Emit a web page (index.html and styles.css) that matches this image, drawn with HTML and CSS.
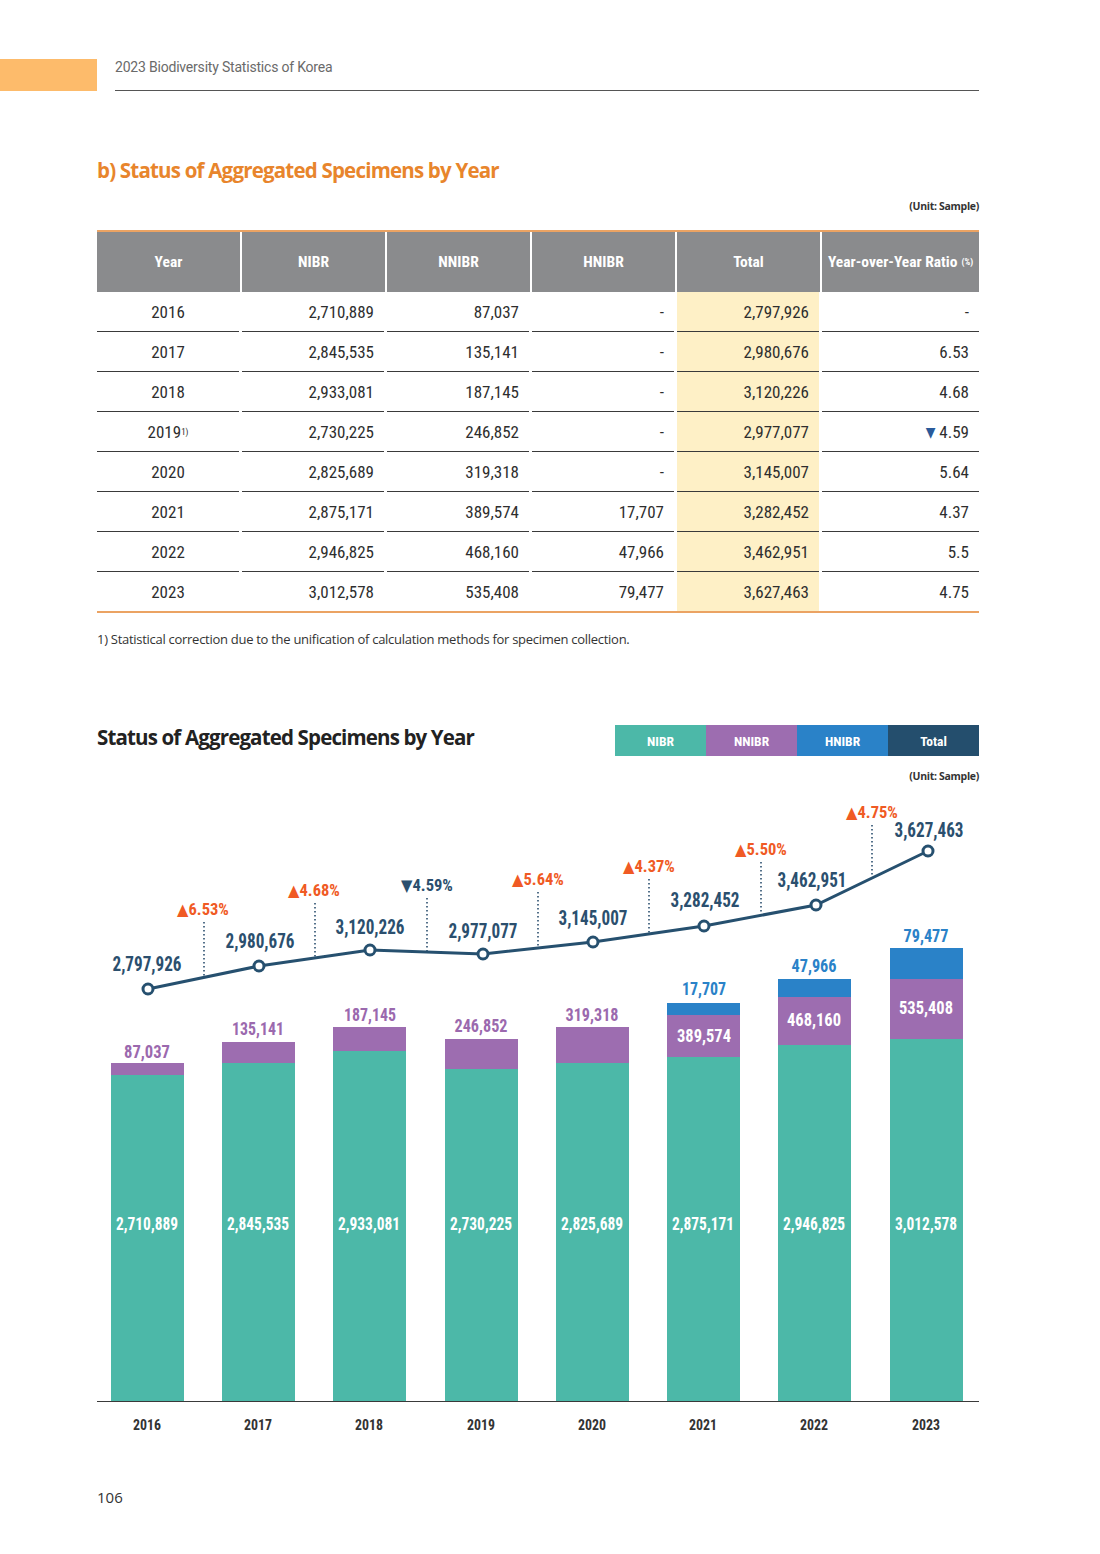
FILE: index.html
```html
<!DOCTYPE html>
<html>
<head>
<meta charset="utf-8">
<link rel="stylesheet" href="styles.css">
</head>
<body>
<div class="page">
  <header class="running-head">
    <div class="tab"></div>
    <div class="head-text">2023 Biodiversity Statistics of Korea</div>
  </header>

  <main class="content">
    <h2 class="section-title">b) Status of Aggregated Specimens by Year</h2>
    <div class="unit">(Unit: Sample)</div>

    <div class="table">
      <div class="row head">
        <div class="cell">Year</div>
        <div class="cell">NIBR</div>
        <div class="cell">NNIBR</div>
        <div class="cell">HNIBR</div>
        <div class="cell">Total</div>
        <div class="cell">Year-over-Year Ratio <span class="pct">(%)</span></div>
      </div>
      <div class="row"><div class="cell c">2016</div><div class="cell">2,710,889</div><div class="cell">87,037</div><div class="cell">-</div><div class="cell total">2,797,926</div><div class="cell">-</div></div>
      <div class="row"><div class="cell c">2017</div><div class="cell">2,845,535</div><div class="cell">135,141</div><div class="cell">-</div><div class="cell total">2,980,676</div><div class="cell">6.53</div></div>
      <div class="row"><div class="cell c">2018</div><div class="cell">2,933,081</div><div class="cell">187,145</div><div class="cell">-</div><div class="cell total">3,120,226</div><div class="cell">4.68</div></div>
      <div class="row"><div class="cell c">2019<sup>1)</sup></div><div class="cell">2,730,225</div><div class="cell">246,852</div><div class="cell">-</div><div class="cell total">2,977,077</div><div class="cell"><span class="down">▼</span>4.59</div></div>
      <div class="row"><div class="cell c">2020</div><div class="cell">2,825,689</div><div class="cell">319,318</div><div class="cell">-</div><div class="cell total">3,145,007</div><div class="cell">5.64</div></div>
      <div class="row"><div class="cell c">2021</div><div class="cell">2,875,171</div><div class="cell">389,574</div><div class="cell">17,707</div><div class="cell total">3,282,452</div><div class="cell">4.37</div></div>
      <div class="row"><div class="cell c">2022</div><div class="cell">2,946,825</div><div class="cell">468,160</div><div class="cell">47,966</div><div class="cell total">3,462,951</div><div class="cell">5.5</div></div>
      <div class="row last"><div class="cell c">2023</div><div class="cell">3,012,578</div><div class="cell">535,408</div><div class="cell">79,477</div><div class="cell total">3,627,463</div><div class="cell">4.75</div></div>
    </div>
    <p class="footnote">1) Statistical correction due to the unification of calculation methods for specimen collection.</p>

    <div class="chart-head">
      <h3 class="chart-title">Status of Aggregated Specimens by Year</h3>
      <ul class="legend">
        <li class="lg nibr">NIBR</li>
        <li class="lg nnibr">NNIBR</li>
        <li class="lg hnibr">HNIBR</li>
        <li class="lg total">Total</li>
      </ul>
    </div>
    <div class="unit unit2">(Unit: Sample)</div>

    <svg class="chart" width="882" height="660" viewBox="97 790 882 660" xmlns="http://www.w3.org/2000/svg">
      <!-- NIBR -->
      <g fill="#4cb8a8">
        <rect x="111" y="1075" width="73" height="326"/>
        <rect x="222" y="1063" width="73" height="338"/>
        <rect x="333" y="1051" width="73" height="350"/>
        <rect x="445" y="1069" width="73" height="332"/>
        <rect x="556" y="1063" width="73" height="338"/>
        <rect x="667" y="1057" width="73" height="344"/>
        <rect x="778" y="1045" width="73" height="356"/>
        <rect x="890" y="1039" width="73" height="362"/>
      </g>
      <!-- NNIBR -->
      <g fill="#9d6db0">
        <rect x="111" y="1063" width="73" height="12"/>
        <rect x="222" y="1042" width="73" height="21"/>
        <rect x="333" y="1027" width="73" height="24"/>
        <rect x="445" y="1039" width="73" height="30"/>
        <rect x="556" y="1027" width="73" height="36"/>
        <rect x="667" y="1015" width="73" height="42"/>
        <rect x="778" y="997" width="73" height="48"/>
        <rect x="890" y="979" width="73" height="60"/>
      </g>
      <!-- HNIBR -->
      <g fill="#2a82c8">
        <rect x="667" y="1003" width="73" height="12"/>
        <rect x="778" y="979" width="73" height="18"/>
        <rect x="890" y="948" width="73" height="31"/>
      </g>
      <line x1="97" y1="1401.5" x2="979" y2="1401.5" stroke="#3a3a3a" stroke-width="1"/>

      <!-- dotted leaders -->
      <g stroke="#2b4f6e" stroke-width="1.6" stroke-dasharray="1.6 2.4">
        <line x1="204" y1="922" x2="204" y2="977"/>
        <line x1="315" y1="903" x2="315" y2="958"/>
        <line x1="427" y1="898" x2="427" y2="952"/>
        <line x1="538" y1="892" x2="538" y2="948"/>
        <line x1="649" y1="879" x2="649" y2="934"/>
        <line x1="761" y1="862" x2="761" y2="915"/>
        <line x1="872" y1="825" x2="872" y2="878"/>
      </g>

      <!-- total line -->
      <polyline points="148,989 259,966 370,950 483,954 593,942 704,926 816,905 928,851" fill="none" stroke="#26506f" stroke-width="3"/>
      <g fill="#fff" stroke="#26506f" stroke-width="3">
        <circle cx="148" cy="989" r="5"/>
        <circle cx="259" cy="966" r="5"/>
        <circle cx="370" cy="950" r="5"/>
        <circle cx="483" cy="954" r="5"/>
        <circle cx="593" cy="942" r="5"/>
        <circle cx="704" cy="926" r="5"/>
        <circle cx="816" cy="905" r="5"/>
        <circle cx="928" cy="851" r="5"/>
      </g>

      <!-- total labels -->
      <g class="t-total">
        <text x="147" y="964" textLength="69" lengthAdjust="spacingAndGlyphs">2,797,926</text>
        <text x="260" y="941" textLength="69" lengthAdjust="spacingAndGlyphs">2,980,676</text>
        <text x="370" y="927" textLength="69" lengthAdjust="spacingAndGlyphs">3,120,226</text>
        <text x="483" y="931" textLength="69" lengthAdjust="spacingAndGlyphs">2,977,077</text>
        <text x="593" y="918" textLength="69" lengthAdjust="spacingAndGlyphs">3,145,007</text>
        <text x="705" y="900" textLength="69" lengthAdjust="spacingAndGlyphs">3,282,452</text>
        <text x="812" y="880" textLength="69" lengthAdjust="spacingAndGlyphs">3,462,951</text>
        <text x="929" y="830" textLength="69" lengthAdjust="spacingAndGlyphs">3,627,463</text>
      </g>
      <!-- yoy -->
      <g class="t-pct">
        <text x="203" y="909">▲6.53%</text>
        <text x="314" y="890">▲4.68%</text>
        <text x="427" y="885" class="dn">▼4.59%</text>
        <text x="538" y="879">▲5.64%</text>
        <text x="649" y="866">▲4.37%</text>
        <text x="761" y="849">▲5.50%</text>
        <text x="872" y="812">▲4.75%</text>
      </g>
      <!-- NNIBR labels -->
      <g class="t-bar purple">
        <text x="147" y="1052" textLength="46" lengthAdjust="spacingAndGlyphs">87,037</text>
        <text x="258" y="1029" textLength="52" lengthAdjust="spacingAndGlyphs">135,141</text>
        <text x="370" y="1015" textLength="52" lengthAdjust="spacingAndGlyphs">187,145</text>
        <text x="481" y="1026" textLength="53" lengthAdjust="spacingAndGlyphs">246,852</text>
        <text x="592" y="1015" textLength="53" lengthAdjust="spacingAndGlyphs">319,318</text>
      </g>
      <g class="t-bar white">
        <text x="704" y="1036" textLength="54" lengthAdjust="spacingAndGlyphs">389,574</text>
        <text x="814" y="1020" textLength="54" lengthAdjust="spacingAndGlyphs">468,160</text>
        <text x="926" y="1008" textLength="54" lengthAdjust="spacingAndGlyphs">535,408</text>
      </g>
      <g class="t-bar blue">
        <text x="704" y="989" textLength="44" lengthAdjust="spacingAndGlyphs">17,707</text>
        <text x="814" y="966" textLength="45" lengthAdjust="spacingAndGlyphs">47,966</text>
        <text x="926" y="936" textLength="45" lengthAdjust="spacingAndGlyphs">79,477</text>
      </g>
      <!-- NIBR labels -->
      <g class="t-bar white">
        <text x="147" y="1224" textLength="62" lengthAdjust="spacingAndGlyphs">2,710,889</text>
        <text x="258" y="1224" textLength="62" lengthAdjust="spacingAndGlyphs">2,845,535</text>
        <text x="369" y="1224" textLength="62" lengthAdjust="spacingAndGlyphs">2,933,081</text>
        <text x="481" y="1224" textLength="62" lengthAdjust="spacingAndGlyphs">2,730,225</text>
        <text x="592" y="1224" textLength="62" lengthAdjust="spacingAndGlyphs">2,825,689</text>
        <text x="703" y="1224" textLength="62" lengthAdjust="spacingAndGlyphs">2,875,171</text>
        <text x="814" y="1224" textLength="62" lengthAdjust="spacingAndGlyphs">2,946,825</text>
        <text x="926" y="1224" textLength="62" lengthAdjust="spacingAndGlyphs">3,012,578</text>
      </g>
      <!-- years -->
      <g class="t-year">
        <text x="147" y="1425" textLength="28" lengthAdjust="spacingAndGlyphs">2016</text>
        <text x="258" y="1425" textLength="28" lengthAdjust="spacingAndGlyphs">2017</text>
        <text x="369" y="1425" textLength="28" lengthAdjust="spacingAndGlyphs">2018</text>
        <text x="481" y="1425" textLength="28" lengthAdjust="spacingAndGlyphs">2019</text>
        <text x="592" y="1425" textLength="28" lengthAdjust="spacingAndGlyphs">2020</text>
        <text x="703" y="1425" textLength="28" lengthAdjust="spacingAndGlyphs">2021</text>
        <text x="814" y="1425" textLength="28" lengthAdjust="spacingAndGlyphs">2022</text>
        <text x="926" y="1425" textLength="28" lengthAdjust="spacingAndGlyphs">2023</text>
      </g>
    </svg>

    <div class="page-no">106</div>
  </main>
</div>
</body>
</html>
```

FILE: styles.css
```css
* { box-sizing: border-box; }
html, body { margin: 0; padding: 0; background: #fff; }
body { width: 1100px; height: 1554px; overflow: hidden; font-family: "Open Sans", "Noto Sans", sans-serif; color: #2b2b2b; }

.page { width: 1100px; }

.running-head { display: flex; margin-top: 59px; height: 32px; }
.tab { width: 97px; height: 32px; background: #fdbb6b; }
.head-text {
  margin-left: 18px; width: 864px; height: 32px;
  border-bottom: 1px solid #555;
  font-family: "Roboto", sans-serif; font-size: 14px; line-height: 16px;
  color: #6a6a6a; letter-spacing: -0.2px;
}

.content { padding-left: 97px; width: 979px; }

.section-title {
  margin: 66px 0 0; font-size: 20.5px; line-height: 26px; font-weight: 700;
  color: #e8852c; letter-spacing: -0.8px;
}

.unit {
  text-align: right; font-size: 10.5px; font-weight: 700; line-height: 14px;
  color: #333; letter-spacing: -0.3px; margin-top: 16px;
}

.cond, .table, .legend, .chart text {
  font-family: "Liberation Sans Narrow", "Roboto Condensed", "DejaVu Sans Condensed", "Roboto", sans-serif;
  font-stretch: condensed;
}

.table { margin-top: 17px; border-top: 2px solid #eba363; border-bottom: 2px solid #eba363; }
.row { display: grid; grid-template-columns: 142px 142px 142px 142px 142px 157px; column-gap: 3px; height: 40px; }
.row .cell {
  border-bottom: 1px solid #3a3a3a; display: flex; align-items: center; justify-content: flex-end;
  padding-right: 10px; font-size: 17px; color: #2e2e2e;
}
.row .cell.c { justify-content: center; padding-right: 0; }
.row .cell.total { background: #fef0c6; }
.row.last { height: 39px; }
.row.last .cell { border-bottom: none; }
.row.head { height: 60px; column-gap: 2px; grid-template-columns: 143px 143px 143px 143px 143px 157px; }
.row.head .cell {
  background: #8a8b8d; color: #fff; font-weight: 700; justify-content: center; padding: 0;
  border-bottom: none; font-size: 15.5px;
}
.pct { font-size: 9px; margin-left: 4px; }
sup { font-size: 9px; line-height: 0; vertical-align: 6px; }
.down { color: #2a5a9a; font-size: 14px; margin-right: 4px; }

.footnote { margin: 18px 0 0; font-size: 13px; line-height: 16px; color: #333; letter-spacing: -0.28px; }

.chart-head { display: flex; justify-content: space-between; align-items: flex-start; margin-top: 78px; }
.chart-title { margin: 0; font-size: 20.5px; line-height: 24px; font-weight: 700; color: #222; letter-spacing: -0.85px; }
.legend { list-style: none; margin: 0; padding: 0; display: flex; height: 31px; }
.lg { width: 91px; display: flex; align-items: center; justify-content: center; color: #fff; font-weight: 700; font-size: 13.5px; }
.lg.nibr { background: #4cb8a8; }
.lg.nnibr { background: #9d6db0; }
.lg.hnibr { background: #2a82c8; }
.lg.total { background: #244e6d; }
.unit2 { margin-top: 13px; }

.chart { display: block; margin-top: 7px; }
.chart text { text-anchor: middle; dominant-baseline: central; font-weight: 700; }
.t-total text { font-size: 20px; fill: #2b4f6e; }
.t-pct text { font-size: 16.5px; fill: #f05a24; }
.t-pct text.dn { fill: #2b4f6e; }
.t-bar text { font-size: 17.5px; }
.purple text { fill: #9b69ae; }
.white text { fill: #fff; }
.blue text { fill: #2a82c8; }
.t-year text { font-size: 15.5px; fill: #333; }

.page-no { margin-top: 38px; font-size: 15px; line-height: 18px; color: #333; }
```
